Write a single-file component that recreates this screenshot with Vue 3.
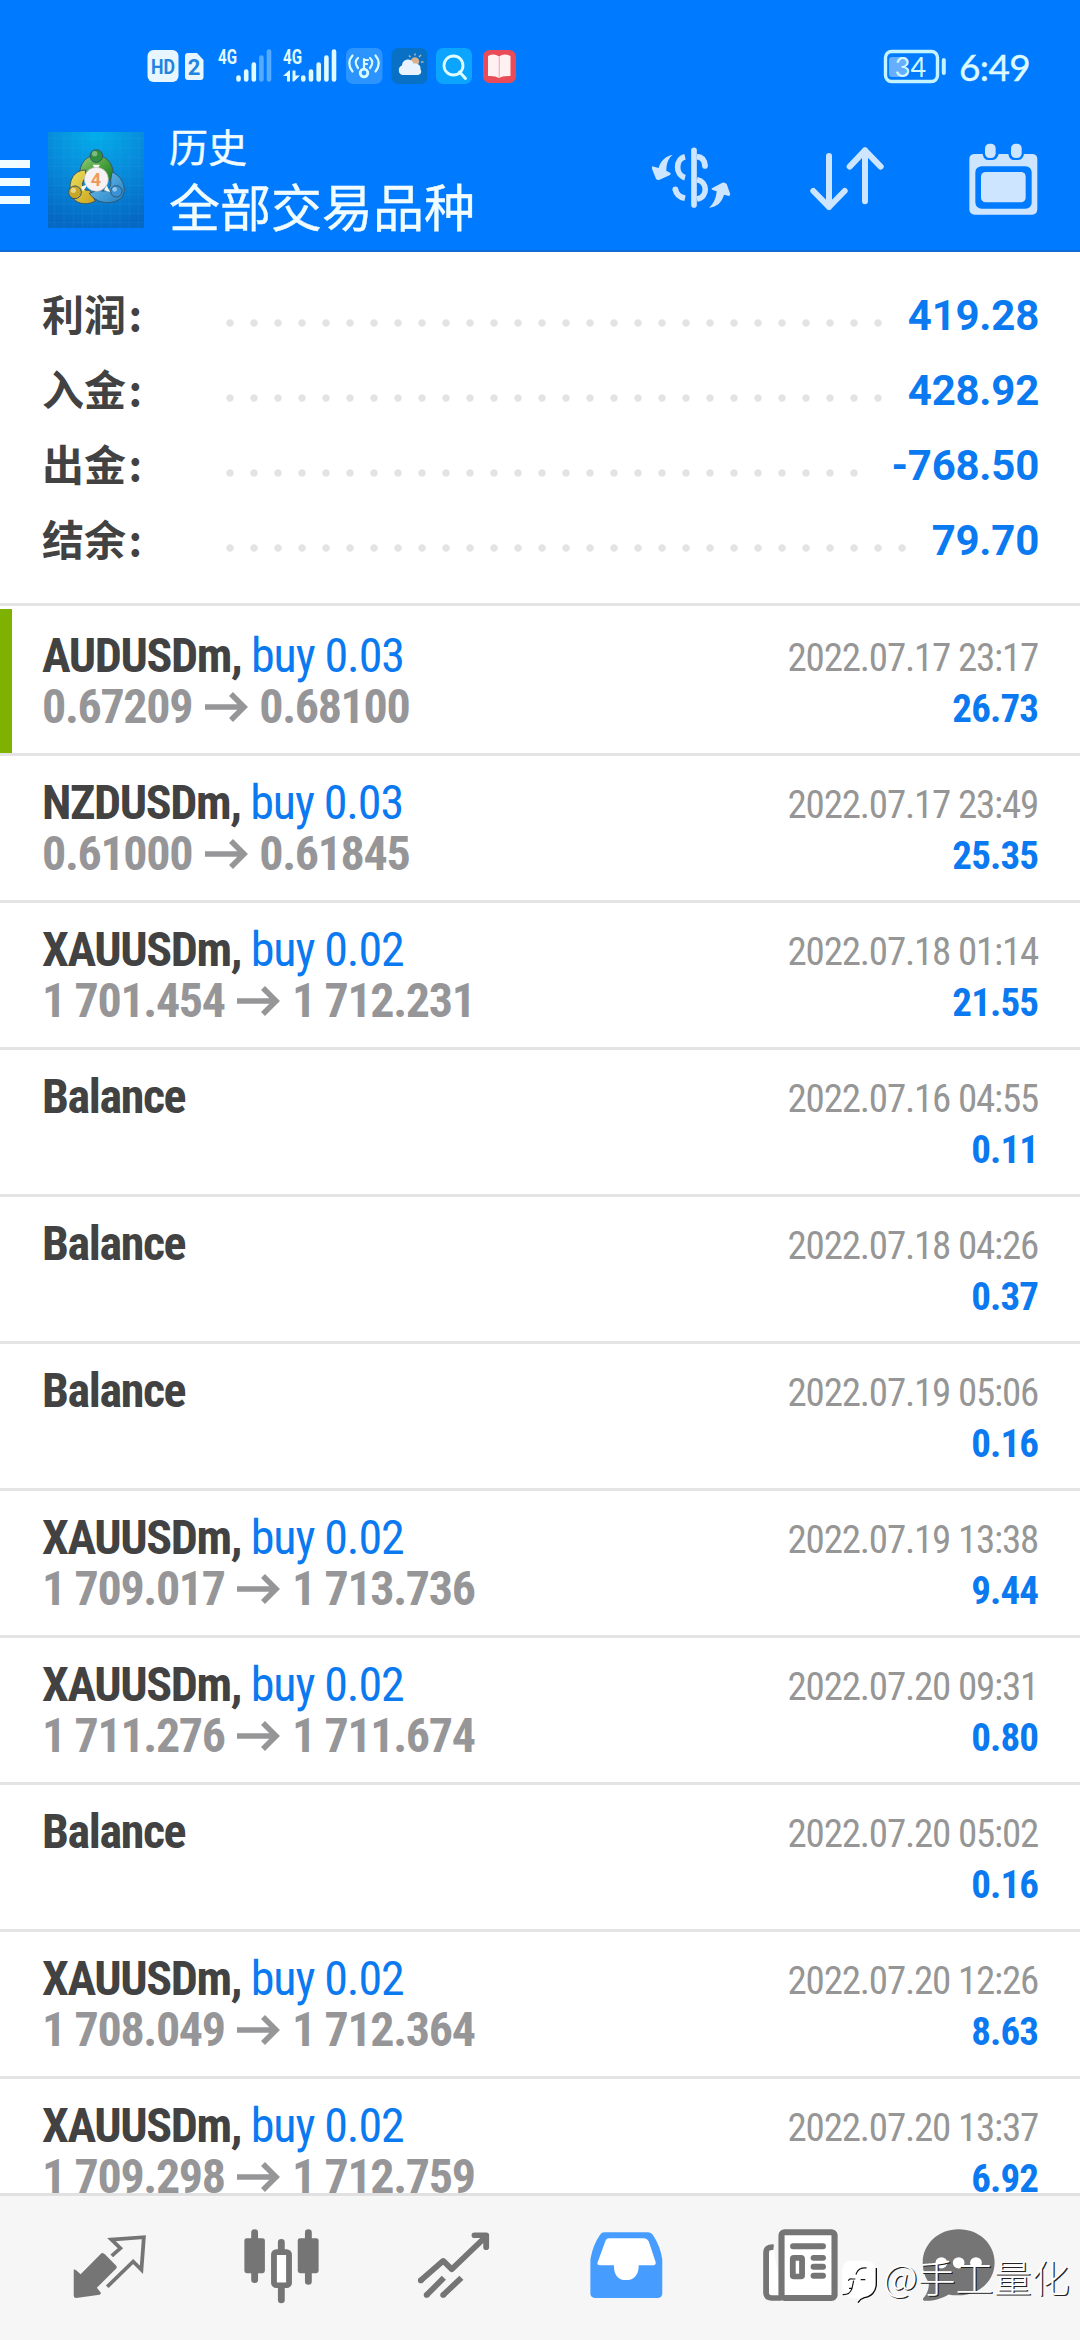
<script setup>
const summary = [
  { label: '利润', value: '419.28', dots: 28 },
  { label: '入金', value: '428.92', dots: 28 },
  { label: '出金', value: '-768.50', dots: 27 },
  { label: '结余', value: '79.70', dots: 29 }
]

const deals = [
  { symbol: 'AUDUSDm', side: 'buy 0.03', from: '0.67209', to: '0.68100', time: '2022.07.17 23:17', profit: '26.73', marked: true },
  { symbol: 'NZDUSDm', side: 'buy 0.03', from: '0.61000', to: '0.61845', time: '2022.07.17 23:49', profit: '25.35' },
  { symbol: 'XAUUSDm', side: 'buy 0.02', from: '1 701.454', to: '1 712.231', time: '2022.07.18 01:14', profit: '21.55' },
  { symbol: 'Balance', time: '2022.07.16 04:55', profit: '0.11' },
  { symbol: 'Balance', time: '2022.07.18 04:26', profit: '0.37' },
  { symbol: 'Balance', time: '2022.07.19 05:06', profit: '0.16' },
  { symbol: 'XAUUSDm', side: 'buy 0.02', from: '1 709.017', to: '1 713.736', time: '2022.07.19 13:38', profit: '9.44' },
  { symbol: 'XAUUSDm', side: 'buy 0.02', from: '1 711.276', to: '1 711.674', time: '2022.07.20 09:31', profit: '0.80' },
  { symbol: 'Balance', time: '2022.07.20 05:02', profit: '0.16' },
  { symbol: 'XAUUSDm', side: 'buy 0.02', from: '1 708.049', to: '1 712.364', time: '2022.07.20 12:26', profit: '8.63' },
  { symbol: 'XAUUSDm', side: 'buy 0.02', from: '1 709.298', to: '1 712.759', time: '2022.07.20 13:37', profit: '6.92' }
]
</script>

<template>
  <div class="screen">
    <header class="top">
      <div class="status">
        <svg class="status-left" width="372" height="40" viewBox="0 0 372 40">
          <rect x="1.500" y="4" width="31" height="32" rx="6" fill="#e8f6ff" />
          <text x="17" y="28" class="hd" text-anchor="middle" textLength="24" lengthAdjust="spacingAndGlyphs">HD</text>
          <path d="M42 7h9l6.500 7v17q0 3-3 3H42q-3 0-3-3V10q0-3 3-3z" fill="#e8f6ff" />
          <text x="48" y="28.500" class="sim" text-anchor="middle">2</text>
          <g fill="none" stroke="#e0fbff" stroke-width="4.600" stroke-linecap="round">
            <path d="M92.500 31.500V33.500M100.200 25.500V33.500M107.800 18.500V33.500" />
            <path d="M115.400 11.500V33.500M123 5.500V33.500" stroke="#54abff" />
            <path d="M157.300 31.500V33.500M165 25.500V33.500M172.700 18.500V33.500M180.400 11.500V33.500M188 5.500V33.500" />
          </g>
          <text x="72" y="17.500" class="net" textLength="19" lengthAdjust="spacingAndGlyphs">4G</text>
          <text x="137" y="17.500" class="net" textLength="19" lengthAdjust="spacingAndGlyphs">4G</text>
          <path d="M137 30L143 24.500H144V35.500H141V30zM146.500 24.500H149.500V29.500H154L148 35.500H146.500z" fill="#e0fbff" />
          <rect x="200" y="2" width="36.500" height="36" rx="7" fill="#2b94ff" />
          <g fill="none" stroke="#d8fbff" stroke-width="2.200" stroke-linecap="round">
            <circle cx="218" cy="27" r="3.800" stroke-width="2.800" />
            <path d="M218 23V13M218 14h4M218 18h3M212 12q-4.500 4 0 10M224 12q4.500 4 0 10M206.500 9.500q-6.500 7.500 0 16M229.500 9.500q6.500 7.500 0 16" />
          </g>
          <rect x="245.500" y="2" width="36" height="36" rx="7" fill="#0870c5" />
          <circle cx="269" cy="15.500" r="4.200" fill="#d9b08c" />
          <path d="M269 9.500v-2M273 11l2-2M275 16h2.500M264.500 11l-1.500-1.500" stroke="#b4b9b6" stroke-width="1.500" />
          <path d="M256.500 29a5 5 0 0 1-.5-9.500c.5-7 9.500-8 11.500-2 5-.5 7.500 2 7 6 2 3-.5 5.500-3 5.500z" fill="#e8f3ff" />
          <rect x="290" y="2" width="36" height="36" rx="7" fill="#0ba5ff" />
          <path d="M313.500 26l6 6.500" stroke="#dffcff" stroke-width="3" stroke-linecap="round" />
          <circle cx="307.500" cy="19.500" r="9.500" fill="none" stroke="#dffcff" stroke-width="2.800" />
          <rect x="337" y="4" width="33" height="33" rx="6.500" fill="#ea4b59" />
          <path d="M342 10q6-3 11 .5q5-3.500 11.500-.5v20q-8-.5-11.500 2q-4-2.500-11-2z" fill="#fff0f2" />
          <path d="M353.300 11v20" stroke="#f5aeb9" stroke-width="1.200" />
        </svg>
        <svg class="battery" width="66" height="36" viewBox="0 0 66 36">
          <rect x="2.500" y="2.500" width="52" height="30" rx="6" fill="none" stroke="#c4f4ff" stroke-width="3.400" />
          <rect x="6" y="8" width="17" height="20" rx="3" fill="#67aeff" />
          <text x="27.500" y="27.500" class="charge" text-anchor="middle">34</text>
          <path d="M60.800 11v13" stroke="#c4f4ff" stroke-width="4" stroke-linecap="round" />
        </svg>
        <span class="clock">6:49</span>
      </div>

      <div class="bar">
        <div class="burger"><i></i><i></i><i></i></div>
        <svg class="logo" width="96" height="96" viewBox="0 0 288 288">
          <defs>
            <radialGradient id="sky" cx=".5" cy="0" r="1">
              <stop offset="0" stop-color="#03aeea" /><stop offset=".45" stop-color="#078fdc" /><stop offset="1" stop-color="#0568c4" />
            </radialGradient>
            <linearGradient id="green" x2="1" y2="1"><stop stop-color="#9bd184" /><stop offset=".5" stop-color="#4da33d" /><stop offset="1" stop-color="#17752a" /></linearGradient>
            <linearGradient id="gold" x2="1" y2="1"><stop stop-color="#ebe15e" /><stop offset="1" stop-color="#cba21c" /></linearGradient>
            <linearGradient id="azure" x2="1" y2="1"><stop stop-color="#78c5f0" /><stop offset="1" stop-color="#207fc3" /></linearGradient>
          </defs>
          <rect width="288" height="288" fill="url(#sky)" />
          <path d="M20 0V288M48 0V288M76 0V288M104 0V288M132 0V288M160 0V288M188 0V288M216 0V288M244 0V288M272 0V288M0 20H288M0 48H288M0 76H288M0 104H288M0 132H288M0 160H288M0 188H288M0 216H288M0 244H288M0 272H288" stroke="#55c5ff" stroke-width="1.500" opacity=".18" />
          <g stroke="#36566a" stroke-width="3">
            <path d="M94 135C94 92 115 70 145 70C180 70 205 105 193 150L165 135C155 105 130 100 118 125z" fill="url(#green)" />
            <path d="M113 114C78 114 60 145 68 184C76 214 112 224 142 207L125 175C105 180 95 155 112 138z" fill="url(#gold)" />
            <path d="M192 120C227 135 240 178 218 200C190 220 145 215 124 184L151 174C175 184 192 170 188 145z" fill="url(#azure)" />
            <circle cx="145" cy="72" r="19" fill="#2f8f3c" />
            <circle cx="81" cy="181" r="19" fill="#c9a529" />
            <circle cx="205" cy="178" r="17" fill="#3a91d5" />
          </g>
          <circle cx="140" cy="65" r="8" fill="#9ecf9d" opacity=".7" />
          <circle cx="76" cy="175" r="8" fill="#f5ebb0" opacity=".7" />
          <circle cx="200" cy="172" r="7" fill="#b1e0fa" opacity=".7" />
          <path d="M134 98h22l-11 20zM99 164l22-8-16 22zM176 160l10 20-18-5z" fill="#f7f9ee" />
          <circle cx="145" cy="142" r="36" fill="#f6f2f4" stroke="#b8b8c0" stroke-width="2" />
          <text x="144" y="162" text-anchor="middle" class="four">4</text>
        </svg>
        <div class="titles">
          <div class="sub">历史</div>
          <div class="main">全部交易品种</div>
        </div>
        <div class="actions">
          <svg width="80" height="64" viewBox="90 79 240 192">
            <g fill="none" stroke="#cde5ff" stroke-width="17">
              <path d="M219 92V256" stroke-linecap="round" />
              <path d="M192 111C163 118 162 166 192 174M228 111C243 112 251 122 252 139M228 180C260 186 262 232 228 238M192 236C174 232 166 224 163 209" />
            </g>
            <g fill="#cde5ff">
              <circle cx="252" cy="139" r="8.500" /><circle cx="163" cy="209" r="8.500" />
              <path d="M155 105C133 110 118 124 113 145L94 140Q91 143 94 150L105 177Q109 183 116 180L147 166Q152 162 147 159L136 153C136 132 142 116 155 105z" />
              <path d="M264 264C288 261 302 249 309 225L324 229Q329 227 327 221L317 193Q312 187 304 189L274 205Q269 209 275 211L287 215C285 235 279 251 264 264z" />
            </g>
          </svg>
          <svg width="76" height="65" viewBox="564 80 228 195">
            <path d="M624 110V263M577 215L624 263L671 215M732 246V93M686 142L732 93L779 142" fill="none" stroke="#cde5ff" stroke-width="18" stroke-linecap="round" stroke-linejoin="round" />
          </svg>
          <svg width="70" height="73" viewBox="1040 68 210 219">
            <path d="M1058 101H1084Q1087 119 1101 119H1114Q1128 118 1132 101H1161Q1164 119 1178 119H1191Q1205 118 1208 101H1234Q1248 103 1248 116V267Q1247 283 1232 283H1059Q1044 282 1044 267V116Q1044 103 1058 101zM1080 138Q1062 140 1062 157V246Q1063 264 1080 265H1212Q1230 264 1231 247V156Q1230 139 1212 138z" fill="#cde5ff" fill-rule="evenodd" />
            <rect x="1079" y="155" width="134" height="91" rx="14" fill="#cde5ff" />
            <rect x="1091" y="70" width="32" height="43" rx="14" fill="#cde5ff" />
            <rect x="1169" y="70" width="32" height="43" rx="14" fill="#cde5ff" />
          </svg>
        </div>
      </div>
    </header>

    <section class="summary">
      <div v-for="s in summary" :key="s.label" class="sum-row">
        <span class="sum-label">{{ s.label }}<span class="colon">:</span></span>
        <span class="leader" :style="{ width: s.dots * 24 + 'px' }"></span>
        <span class="sum-value">{{ s.value }}</span>
      </div>
    </section>

    <main class="deals">
      <article v-for="(d, i) in deals" :key="i" class="deal" :class="{ marked: d.marked }">
        <div class="left">
          <div class="name">{{ d.symbol }}<template v-if="d.side">, <span class="side">{{ d.side }}</span></template></div>
          <div v-if="d.from" class="prices">
            {{ d.from }}
            <svg class="arrow" width="43" height="30" viewBox="0 0 43 30"><path d="M0 15H38M26 2L39 15L26 28" fill="none" stroke="#969698" stroke-width="5.600" /></svg>
            {{ d.to }}
          </div>
        </div>
        <div class="right">
          <div class="time">{{ d.time }}</div>
          <div class="profit">{{ d.profit }}</div>
        </div>
      </article>
    </main>

    <nav class="tabs">
      <svg width="76" height="78" viewBox="210 500 220 235" preserveAspectRatio="none">
        <path d="M298 578Q302 579 306 583L338 617Q341 621 338 625L282 683L293 697Q295 702 290 704L222 714Q215 714 215 707V628Q219 627 222 630L235 642L293 581Q295 578 298 578z" fill="#757575" />
        <path d="M325 587L350 564L324 538L418 531L411 629L387 604L312 680" fill="none" stroke="#757575" stroke-width="11" />
      </svg>
      <svg width="77" height="78" viewBox="705 500 225 235" preserveAspectRatio="none">
        <path d="M739 517V659M817 546V575M817 680V720M896 517V664" stroke="#757575" stroke-width="20" stroke-linecap="round" />
        <rect x="709" y="534" width="60" height="105" rx="7" fill="#757575" />
        <rect x="865" y="534" width="61" height="105" rx="7" fill="#757575" />
        <rect x="795.500" y="575.500" width="44" height="100" rx="7" fill="#fff" stroke="#757575" stroke-width="17" />
      </svg>
      <svg width="74" height="78" viewBox="1210 500 215 235" preserveAspectRatio="none">
        <g fill="none" stroke="#757575" stroke-width="17">
          <path d="M1221 661L1286 602L1311 627L1408 531M1238 705L1288 653M1286 705L1339 653" stroke-linejoin="round" />
          <path d="M1377 525H1411V561" stroke-linecap="round" stroke-linejoin="round" />
        </g>
        <path d="M1221 661h.1M1238 705h.1M1286 705h.1" stroke="#757575" stroke-width="17" stroke-linecap="round" />
      </svg>
      <svg width="75" height="78" viewBox="143 500 217 235" preserveAspectRatio="none">
        <path d="M188 516H314Q323 516 328 524Q349 557 355 597V702Q354 713 343 714H160Q148 713 147 702V597Q154 554 175 523Q179 516 188 516z" fill="#469dff" />
        <path d="M201 534H303Q312 535 316 544L336 606Q337 614 330 615H287Q286 660 250 660Q215 660 215 615H175Q165 615 168 606L190 544Q193 534 201 534z" fill="#fff" />
      </svg>
      <svg width="77" height="78" viewBox="643 500 225 235" preserveAspectRatio="none">
        <path d="M677 561Q655 559 655 578V700Q656 713 670 714H700" fill="#fff" stroke="#757575" stroke-width="17" />
        <rect x="700" y="516" width="155" height="198" rx="9" fill="#fff" stroke="#757575" stroke-width="18" />
        <path d="M734 558H821M794 593H821M794 620H821M794 647H821" stroke="#757575" stroke-width="18" stroke-linecap="round" />
        <rect x="733" y="593" width="27" height="56" rx="3" fill="#fff" stroke="#757575" stroke-width="17" />
      </svg>
      <svg width="75" height="78" viewBox="1105 500 217 235" preserveAspectRatio="none">
        <path d="M1214 507C1274 507 1318 552 1318 607C1318 665 1270 706 1214 706C1202 706 1194 705 1185 703C1163 716 1136 724 1115 722Q1108 722 1112 714C1123 702 1128 686 1128 667C1116 652 1110 630 1110 607C1110 552 1155 507 1214 507z" fill="#757575" />
        <g fill="#fff"><circle cx="1164" cy="608" r="17" /><circle cx="1214" cy="608" r="17" /><circle cx="1264" cy="608" r="17" /></g>
      </svg>
    </nav>

    <div class="watermark">
      <svg width="40" height="46" viewBox="27 57 120 138">
        <path d="M62 62H108Q137 64 139 92V130C139 155 124 171 100 175L84 188V176L60 173L36 160V90Q38 64 62 62z" fill="#fff" />
        <path d="M139 84V130C139 155 124 170 103 173Q90 177 84 188" fill="none" stroke="#0c0c0c" stroke-width="4" />
        <path d="M110 84Q88 82 80 98L78 104M55 122Q58 115 66 117H76M92 119H106M71 122L66 145L57 145M66 145Q60 165 38 164" fill="none" stroke="#161616" stroke-width="3.500" />
      </svg>
      <span>@手工量化</span>
    </div>
  </div>
</template>

<style>
html, body { margin: 0; background: #fff; }
</style>

<style scoped>
.screen {
  position: relative;
  display: flex;
  flex-direction: column;
  width: 1080px;
  height: 2340px;
  overflow: hidden;
  background: #fff;
  font-family: Roboto, "Noto Sans CJK SC", sans-serif;
}
.top {
  display: flex;
  flex-direction: column;
  box-sizing: border-box;
  height: 252px;
  flex: none;
  background: #007aff;
  border-bottom: 2px solid #116bd4;
}
.status { display: flex; height: 110px; padding-left: 146px; align-items: flex-start; }
.status-left { margin-top: 46px; }
.battery { margin: 49px 0 0 365px; }
.clock {
  margin: 45px 0 0 10px;
  color: #dcfaff;
  font: 400 37px/44px Lato, sans-serif;
  letter-spacing: -.6px;
  -webkit-text-stroke: .4px #dcfaff;
  white-space: nowrap;
}
.hd { font: 700 21px Roboto, sans-serif; fill: #2384df; }
.sim { font: 700 22px Roboto, sans-serif; fill: #2384df; }
.net { font: 700 20px Roboto, sans-serif; fill: #e0fbff; }
.charge { font: 400 27px Lato, sans-serif; fill: #d2f8ff; }
.four { font: 700 54px Roboto, sans-serif; fill: #ef9a58; }

.bar { display: flex; height: 140px; }
.burger { display: flex; flex-direction: column; gap: 10px; width: 30px; padding-top: 50px; }
.burger i { display: block; height: 8px; background: #f0fcff; }
.logo { margin: 22px 0 0 18px; flex: none; }
.titles {
  margin-left: 25px;
  padding-top: 9px;
  width: 340px;
  color: #f0fcff;
  font-family: "Noto Sans CJK SC", sans-serif;
  -webkit-text-stroke: .4px #f0fcff;
  white-space: nowrap;
}
.sub { font-size: 39px; line-height: 52px; }
.main { font-size: 51px; line-height: 69px; }
.actions { display: flex; margin-left: 142px; }
.actions svg { flex: none; margin-top: 36px; }
.actions svg + svg { margin-left: 78px; }
.actions svg:last-child { margin: 33px 0 0 83px; }

.summary {
  box-sizing: border-box;
  height: 354px;
  flex: none;
  padding: 22px 42px 0;
  border-bottom: 3px solid #e4e4e4;
}
.sum-row { display: flex; align-items: baseline; height: 75px; line-height: 75px; }
.sum-label {
  position: relative;
  top: 1px;
  width: 176px;
  color: #424242;
  font-family: "Noto Sans CJK SC", sans-serif;
  font-size: 42px;
  font-weight: 700;
}
.colon { margin-left: 2.5px; }
.leader {
  height: 14px;
  background: radial-gradient(circle at center, #e3e3e3 3.2px, transparent 4.2px) 0 0 / 24px 14px repeat-x;
}
.sum-value { margin: 0 -1px 0 auto; color: #0b79f0; font-size: 42px; font-weight: 700; letter-spacing: -.25px; }

.deals { flex: 1; min-height: 0; overflow: hidden; padding-top: 3px; }
.deal {
  display: flex;
  justify-content: space-between;
  box-sizing: border-box;
  height: 147px;
  padding: 0 42px;
  border-bottom: 3px solid #e4e4e4;
  font-family: "Roboto Condensed", Roboto, sans-serif;
  font-stretch: 75%;
  letter-spacing: -1.2px;
  line-height: 51px;
  white-space: nowrap;
}
.deal.marked { background: linear-gradient(#7eb100, #7eb100) 0 0 / 12px 144px no-repeat; }
.left { padding-top: 21px; }
.right { padding-top: 24px; text-align: right; }
.name { color: #424242; font-size: 48px; font-weight: 700; letter-spacing: -1.4px; }
.side { color: #0b79f0; font-weight: 400; letter-spacing: -1.1px; }
.prices { color: #969698; font-size: 48px; font-weight: 700; letter-spacing: -1.35px; }
.arrow { margin: 0 1.8px 0 3px; vertical-align: 1px; }
.time { color: #969696; font-size: 39px; }
.profit { color: #0b79f0; font-size: 39px; font-weight: 700; letter-spacing: -.9px; }

.tabs {
  display: grid;
  grid-template-columns: 172px 171px 173px 173px 174px 142px;
  justify-items: center;
  box-sizing: border-box;
  height: 147px;
  flex: none;
  padding: 31px 0 0 24px;
  border-top: 3px solid #e1e1e2;
  background: #f6f6f6;
}
.watermark {
  position: absolute;
  left: 839px;
  top: 2259px;
  display: flex;
  color: #fff;
  font: 300 38px/40px "Noto Sans CJK SC", sans-serif;
  text-shadow: 1.2px 1.2px 0 #222;
  white-space: nowrap;
}
.watermark span { margin: -3px 0 0 4px; }
</style>
